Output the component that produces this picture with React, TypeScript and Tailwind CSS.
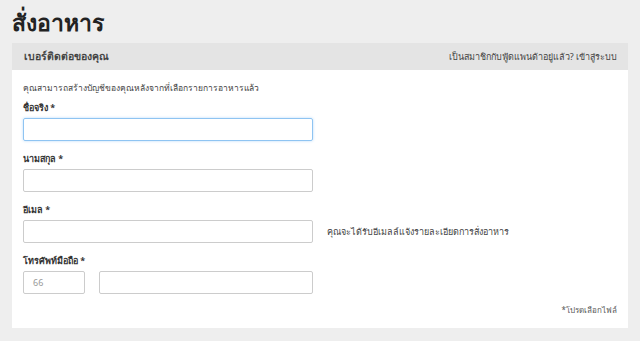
export default function App() {
  return (
    <div className="min-h-[341px] w-[640px] bg-[#eeeeee] px-3 pb-3 text-[#333333]" style={{ fontFamily: '"Noto Sans", "Liberation Sans", sans-serif' }}>
      <h1 className="flex h-[43px] items-center pt-[1px] text-[23px] font-bold leading-none text-[#222222]">สั่งอาหาร</h1>
      <div className="bg-white">
        <div className="flex h-[27px] items-center justify-between bg-[#e4e4e4] pl-[12px] pr-[11px]">
          <span className="text-[10.5px] font-bold text-[#444444]">เบอร์ติดต่อของคุณ</span>
          <span className="text-[9px] text-[#444444]">เป็นสมาชิกกับฟู้ดแพนด้าอยู่แล้ว? เข้าสู่ระบบ</span>
        </div>
        <div className="px-[11px] pb-[11px] pt-[11px] text-[9px]">
          <p className="h-[14px] text-[8.5px] leading-[14px] text-[#444444]">คุณสามารถสร้างบัญชีของคุณหลังจากที่เลือกรายการอาหารแล้ว</p>
          <div className="mt-[6px]">
            <label className="block h-[14px] font-bold leading-[14px] text-[#333333]">ชื่อจริง *</label>
            <div className="mt-[3px] h-[23px] w-[290px] rounded-[2px] border border-[#8fc4f2] shadow-[0_0_3px_#b9dbf9]"></div>
          </div>
          <div className="mt-[11px]">
            <label className="block h-[14px] font-bold leading-[14px]">นามสกุล *</label>
            <div className="mt-[3px] h-[23px] w-[290px] rounded-[2px] border border-[#cccccc]"></div>
          </div>
          <div className="mt-[11px]">
            <label className="block h-[14px] font-bold leading-[14px]">อีเมล *</label>
            <div className="mt-[3px] flex items-center">
              <div className="h-[23px] w-[290px] rounded-[2px] border border-[#cccccc]"></div>
              <span className="ml-[14px] text-[#444444]">คุณจะได้รับอีเมลล์แจ้งรายละเอียดการสั่งอาหาร</span>
            </div>
          </div>
          <div className="mt-[11px]">
            <label className="block h-[14px] font-bold leading-[14px]">โทรศัพท์มือถือ *</label>
            <div className="mt-[3px] flex gap-[14px]">
              <div className="flex h-[23px] w-[62px] items-center rounded-[2px] border border-[#cccccc] px-[9px] text-[#999999]">66</div>
              <div className="h-[23px] w-[214px] rounded-[2px] border border-[#cccccc]"></div>
            </div>
          </div>
          <div className="mt-[9px] flex h-[14px] items-center justify-end text-[8px] leading-[14px] text-[#555555]">*โปรดเลือกไฟล์</div>
        </div>
      </div>
    </div>
  );
}
